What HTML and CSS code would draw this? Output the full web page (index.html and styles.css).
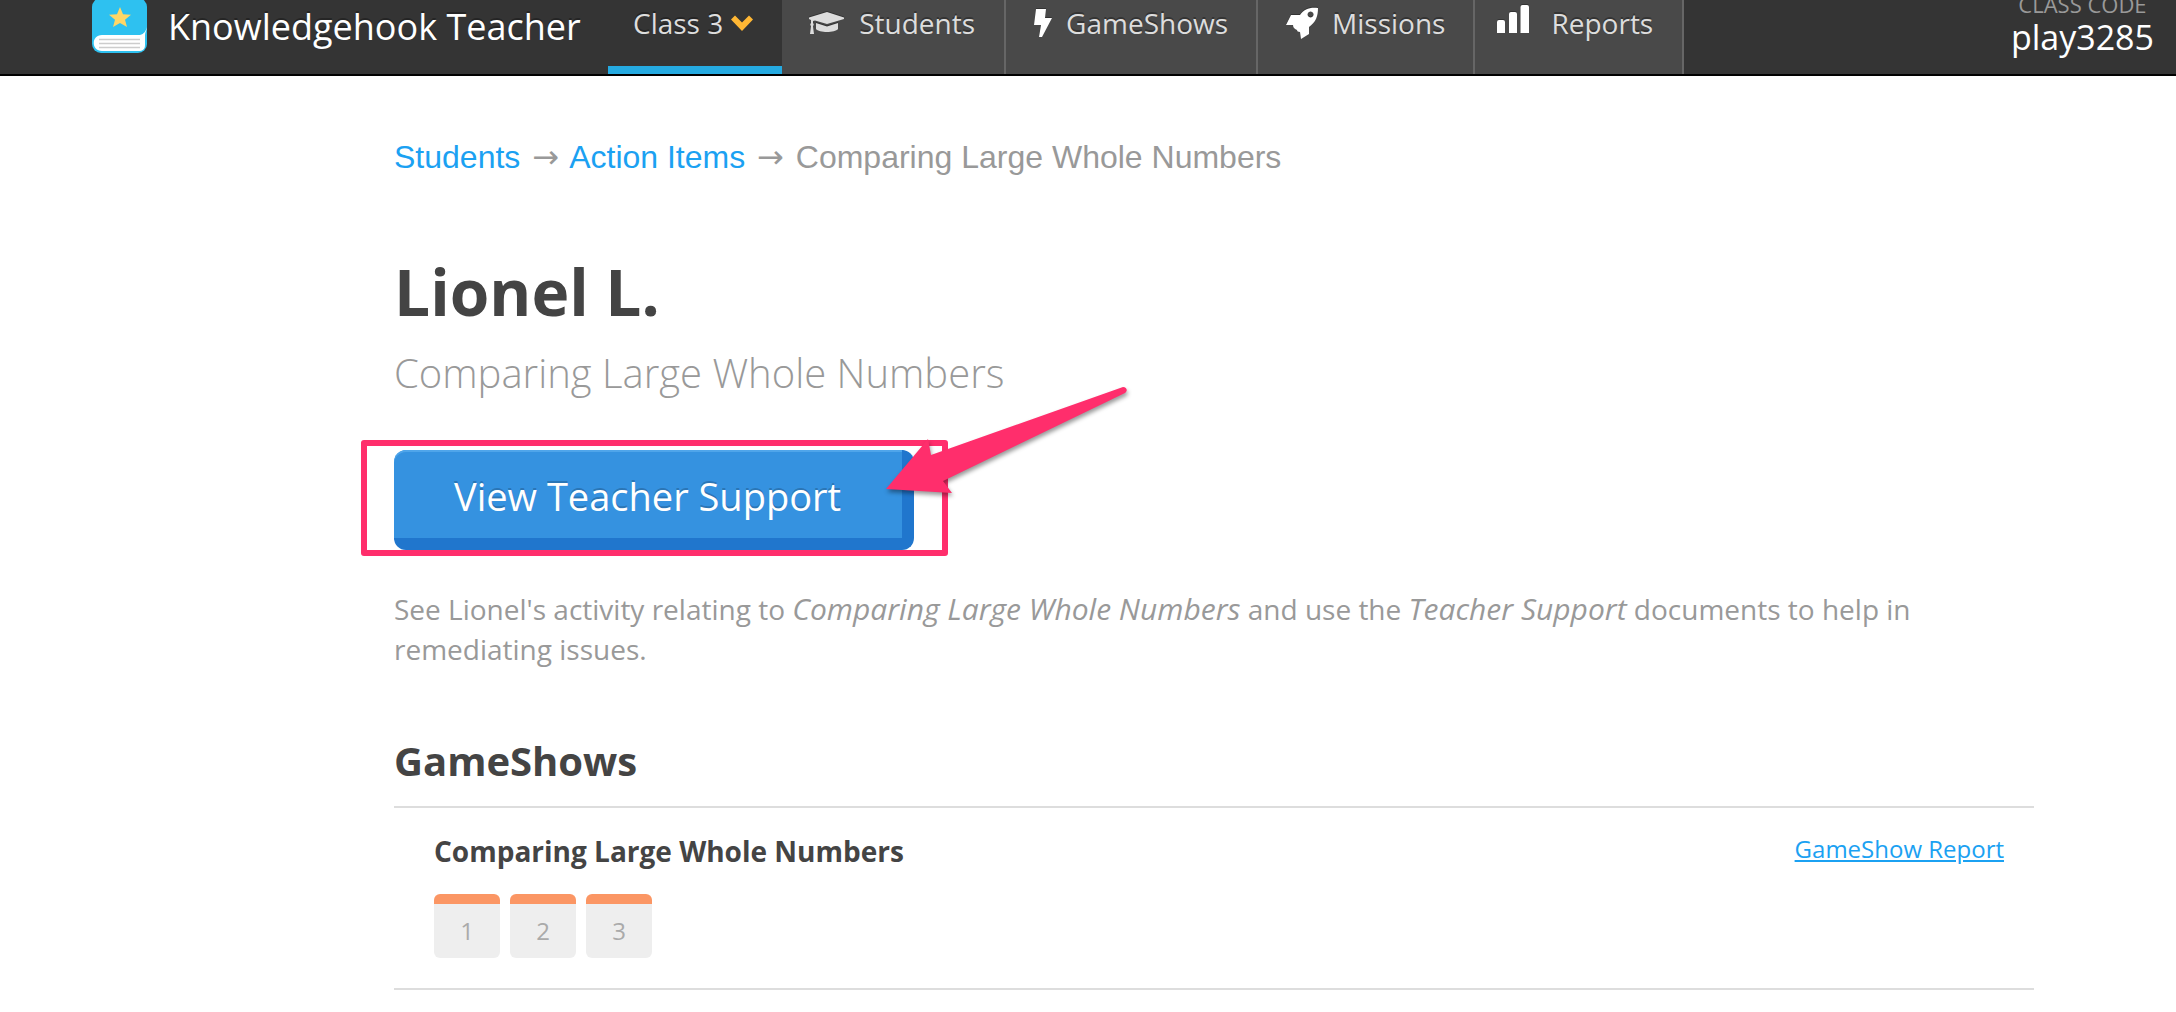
FILE: index.html
```html
<!DOCTYPE html>
<html lang="en">
<head>
  <meta charset="UTF-8">
  <title>Knowledgehook Teacher</title>
  <meta name="viewport" content="width=device-width, initial-scale=1">
  <link rel="stylesheet" href="styles.css">
</head>
<body>
  <header class="topbar">
    <a class="brand" href="#">
      <svg class="brand-logo" viewBox="0 0 56 56" aria-hidden="true">
        <rect x="0" y="0" width="55" height="55" rx="9" fill="#2ec1f0"/>
        <path d="M55 29c-1 4-3 7-7 8H10c-11 0-11 16 0 16h36c5 0 7-2 7-6V37c0-3 2-5 2-8z" fill="#fff"/>
        <path d="M7 41.500H48M7 45.500H48M7 49.500H48" stroke="#ccc" stroke-width="1.500"/>
        <path d="M28 9l3 7.200 8 .5-6 5 2 7.300-7-4-7 4 2-7.300-6-5 8-.5z" fill="#ffd766"/>
      </svg>
      Knowledgehook Teacher
    </a>
    <nav class="nav">
      <a class="nav-item class-picker" href="#">Class 3
        <svg class="chevron" viewBox="0 0 22 16" aria-hidden="true"><path d="M0 4.500L4 .5l7 7 7-7 4 4L11 16z" fill="#ffb734"/></svg>
      </a>
      <a class="nav-item students" href="#">
        <svg class="nav-icon cap" viewBox="0 0 36 22" aria-hidden="true">
          <path d="M18 0l17 5.500v1.500L18 12 6 8.500 4 9v2c1 1 1 2 0 3l1 8H1l1-8c-1-1-1-2 0-3V8L0 7V5.500z" fill="#ddd"/>
          <path d="M7 11l11 3.500L29 11v6c-3 4-19 4-22 0z" fill="#ddd"/>
        </svg>
        Students
      </a>
      <a class="nav-item" href="#">
        <svg class="nav-icon bolt" viewBox="0 0 18 28" aria-hidden="true"><path d="M2 0h10l-1 9h7L8 28H5l2-12H0z" fill="#fff"/></svg>
        GameShows
      </a>
      <a class="nav-item" href="#">
        <svg class="nav-icon rocket" viewBox="0 0 32 32" aria-hidden="true">
          <path fill-rule="evenodd" d="M32 1c0 8-2 14-9 19v7l-8 5-1-7c-2 0-3-1-3-2-2-1-4-2-4-5H0l5-10h9C18 2 24 0 32 1zM24.500 4.500a3 3 0 1 0 .1 0z" fill="#fff"/>
        </svg>
        Missions
      </a>
      <a class="nav-item reports" href="#">
        <svg class="nav-icon bars" viewBox="0 0 32 28" aria-hidden="true">
          <path d="M0 28V17q0-2 2-2h4q2 0 2 2v11zM12 28V9q0-2 2-2h4q2 0 2 2v19zM23.500 28V2q0-2 2-2H30q2 0 2 2v26z" fill="#fff"/>
        </svg>
        Reports
      </a>
    </nav>
    <div class="class-code">
      <span class="class-code-label">CLASS CODE</span>
      <span class="class-code-value">play3285</span>
    </div>
  </header>

  <main class="page">
    <nav class="breadcrumb">
      <a href="#">Students</a> <span class="arrow">→</span> <a href="#">Action Items</a> <span class="arrow">→</span> Comparing Large Whole Numbers
    </nav>

    <h1 class="student-name">Lionel L.</h1>
    <p class="skill-name">Comparing Large Whole Numbers</p>

    <div class="support">
      <button class="support-button" type="button">View Teacher Support</button>
      <div class="callout"></div>
      <svg class="callout-arrow" viewBox="0 0 244 112" aria-hidden="true">
        <path d="M0 104L42 54l3 16L237 2c4 0 5 4 2 6L57 96l9 12z" fill="#ff2e6c"/>
      </svg>
    </div>

    <p class="intro">See Lionel's activity relating to <em>Comparing Large Whole Numbers</em> and use the <em>Teacher Support</em> documents to help in remediating issues.</p>

    <h2 class="section-title">GameShows</h2>
    <section class="gameshow">
      <div class="gameshow-info">
        <h3 class="gameshow-title">Comparing Large Whole Numbers</h3>
        <div class="questions">
          <button class="question" type="button">1</button>
          <button class="question" type="button">2</button>
          <button class="question" type="button">3</button>
        </div>
      </div>
      <a class="report-link" href="#">GameShow Report</a>
    </section>
  </main>
</body>
</html>
```
FILE: styles.css
```css
* {
  box-sizing: border-box;
}
body {
  margin: 0;
  background: #fff;
  color: #999;
  font-family: "Open Sans", sans-serif;
}
a {
  color: #1ba1f2;
  text-decoration: none;
}
h1, h2, h3, p {
  margin: 0;
}

/* top bar, partly scrolled out of view */
.topbar {
  display: flex;
  height: 98px;
  margin-top: -22px;
  background: #343434;
  border-bottom: 2px solid #000;
}
.brand {
  display: flex;
  align-items: center;
  gap: 20px;
  width: 608px;
  padding-left: 92px;
  color: #fff;
  font-size: 36px;
  white-space: nowrap;
  text-shadow: 0 -2px 0 rgba(0,0,0,0.3);
}
.brand-logo {
  width: 56px;
  height: 56px;
}
.nav {
  display: flex;
}
.nav-item {
  display: flex;
  align-items: center;
  padding: 0 28px 6px 28px;
  background: #494949;
  border-right: 2px solid #666;
  color: #ddd;
  font-size: 28px;
  white-space: nowrap;
  text-shadow: 0 -2px 0 rgba(0,0,0,0.3);
}
.class-picker {
  gap: 8px;
  padding: 2px 29px 0 25px;
  background: none;
  border-right: none;
  border-bottom: 8px solid #25aae1;
}
.chevron {
  width: 22px;
  height: 16px;
}
.nav-icon {
  margin-right: 14px;
  filter: drop-shadow(0 -1px 0 rgba(0,0,0,0.3));
}
.students {
  padding-left: 27px;
  padding-right: 29px;
}
.cap {
  width: 36px;
  height: 22px;
}
.bolt {
  width: 18px;
  height: 28px;
}
.rocket {
  width: 32px;
  height: 32px;
}
.reports {
  padding-left: 22px;
  padding-right: 29px;
}
.bars {
  width: 32px;
  height: 28px;
  margin: 0 22px 8px 0;
}
.class-code {
  display: flex;
  flex-direction: column;
  margin-left: auto;
  padding: 12px 22px 0 0;
  text-align: center;
}
.class-code-label {
  color: #999;
  font-size: 22px;
  line-height: 28px;
}
.class-code-value {
  color: #fff;
  font-size: 34px;
  line-height: 38px;
}

.page {
  padding: 61px 142px 22px 394px;
}
.breadcrumb {
  font-family: "Liberation Sans", Arial, sans-serif;
  font-size: 32px;
  line-height: 40px;
}
.arrow {
  margin: 0 3px;
  font-family: "DejaVu Sans", sans-serif;
  line-height: 1;
}
.student-name {
  margin-top: 75px;
  color: #444;
  font-size: 64px;
  line-height: 80px;
}
.skill-name {
  margin-top: 13px;
  font-size: 40px;
  font-weight: 300;
  line-height: 56px;
}

.support {
  position: relative;
  width: fit-content;
  margin-top: 49px;
}
.support-button {
  display: block;
  height: 100px;
  padding: 3px 61px 0 60px;
  background: #3592e0;
  border: 0 solid #2076cd;
  border-width: 0 12px 12px 0;
  border-radius: 12px;
  box-shadow: inset 0 2px 0 #4fa5ea;
  color: #fff;
  font-family: inherit;
  font-size: 38px;
  text-shadow: 0 -2px 0 rgba(0,0,0,0.2);
  cursor: pointer;
}
.callout {
  position: absolute;
  top: -10px;
  right: -34px;
  bottom: -6px;
  left: -33px;
  border: 6px solid #ff2e6c;
  border-radius: 3px;
  pointer-events: none;
}
.callout-arrow {
  position: absolute;
  top: -65px;
  right: -216px;
  width: 244px;
  height: 112px;
  filter: drop-shadow(1px 3px 2px rgba(0,0,0,0.4));
  pointer-events: none;
}

.intro {
  margin-top: 39px;
  padding-right: 60px;
  font-size: 28px;
  line-height: 40px;
}
.intro em {
  font-size: 30px;
  line-height: 1;
}

.section-title {
  margin-top: 64px;
  padding-bottom: 17px;
  border-bottom: 2px solid #ddd;
  color: #444;
  font-size: 40px;
  line-height: 56px;
}
.gameshow {
  display: flex;
  justify-content: space-between;
  align-items: flex-start;
  padding: 23px 30px 30px 40px;
  border-bottom: 2px solid #ddd;
}
.gameshow-title {
  color: #444;
  font-size: 28px;
  line-height: 40px;
}
.questions {
  display: flex;
  gap: 10px;
  margin-top: 23px;
}
.question {
  width: 66px;
  height: 64px;
  padding: 8px 0 0;
  background: linear-gradient(#fb9664 10px, #eee 10px);
  border: none;
  border-radius: 6px;
  color: #aaa;
  font-family: inherit;
  font-size: 24px;
  cursor: pointer;
}
.report-link {
  font-size: 24px;
  line-height: 36px;
  text-decoration: underline;
}
```
